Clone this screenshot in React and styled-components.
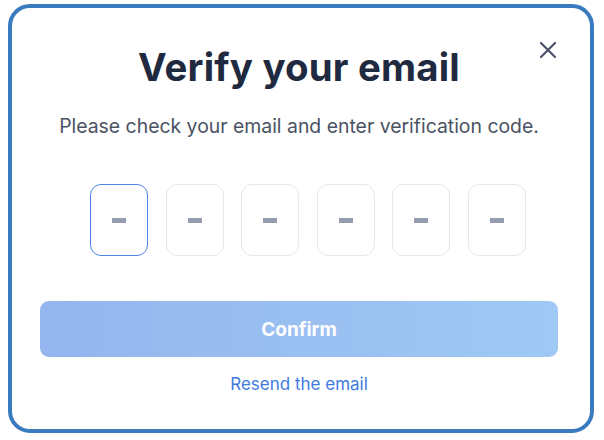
import styled, { createGlobalStyle } from "styled-components";

const GlobalStyle = createGlobalStyle`
  body {
    margin: 0;
    background: #ffffff;
    font-family: Inter, "Noto Sans", sans-serif;
  }
`

const Card = styled.div`
  position: relative;
  box-sizing: border-box;
  width: 586px;
  height: 429px;
  margin: 4px 0 0 8px;
  border: 4px solid #3a7bbf;
  border-radius: 22px;
  background: #fff;
  display: flex;
  flex-direction: column;
  align-items: center;
  padding: 0 32px 0 28px;
`

const Close = styled.button`
  position: absolute;
  top: 30px;
  right: 30px;
  width: 24px;
  height: 24px;
  padding: 0;
  border: none;
  background: none;
  display: flex;
  align-items: center;
  justify-content: center;
  cursor: pointer;
`

const Title = styled.h2`
  margin: 36px 0 0;
  font-size: 38.4px;
  line-height: 46px;
  font-weight: 700;
  color: #1f2940;
  letter-spacing: 0.2px;
  white-space: nowrap;
`

const Desc = styled.p`
  margin: 24px 0 0;
  font-size: 19.4px;
  line-height: 24px;
  color: #4a5263;
  white-space: nowrap;
`

const CodeRow = styled.div`
  display: flex;
  gap: 17.5px;
  margin: 46px 0 0 18px;
`

const CodeBox = styled.div`
  box-sizing: border-box;
  width: 58px;
  height: 72px;
  border-radius: 11px;
  border: 1px solid ${p => (p.$active ? "#4f86e6" : "#e3e8f0")};
  display: flex;
  align-items: center;
  justify-content: center;
`

const Dash = styled.span`
  width: 14px;
  height: 5px;
  background: #959cb0;
`

const Confirm = styled.button`
  align-self: stretch;
  margin-top: 45px;
  height: 56px;
  border: none;
  border-radius: 9px;
  background: linear-gradient(90deg, #94b5ee 0%, #9fc9f4 100%);
  color: #fff;
  font-family: Inter, sans-serif;
  font-size: 19px;
  font-weight: 700;
  cursor: pointer;
`

const Resend = styled.a`
  margin-top: 16px;
  font-size: 17px;
  line-height: 22px;
  color: #3d7ae0;
  cursor: pointer;
`

const App = () => {
  return (
    <>
      <GlobalStyle />
      <Card>
        <Close aria-label="close">
          <svg width="18" height="18" viewBox="0 0 18 18">
            <path d="M2 2 L16 16 M16 2 L2 16" stroke="#4c5366" strokeWidth="2.2" strokeLinecap="round" />
          </svg>
        </Close>
        <Title>Verify your email</Title>
        <Desc>Please check your email and enter verification code.</Desc>
        <CodeRow>
          {[0, 1, 2, 3, 4, 5].map(i => (
            <CodeBox key={i} $active={i === 0}>
              <Dash />
            </CodeBox>
          ))}
        </CodeRow>
        <Confirm>Confirm</Confirm>
        <Resend>Resend the email</Resend>
      </Card>
    </>
  )
}

export default App
